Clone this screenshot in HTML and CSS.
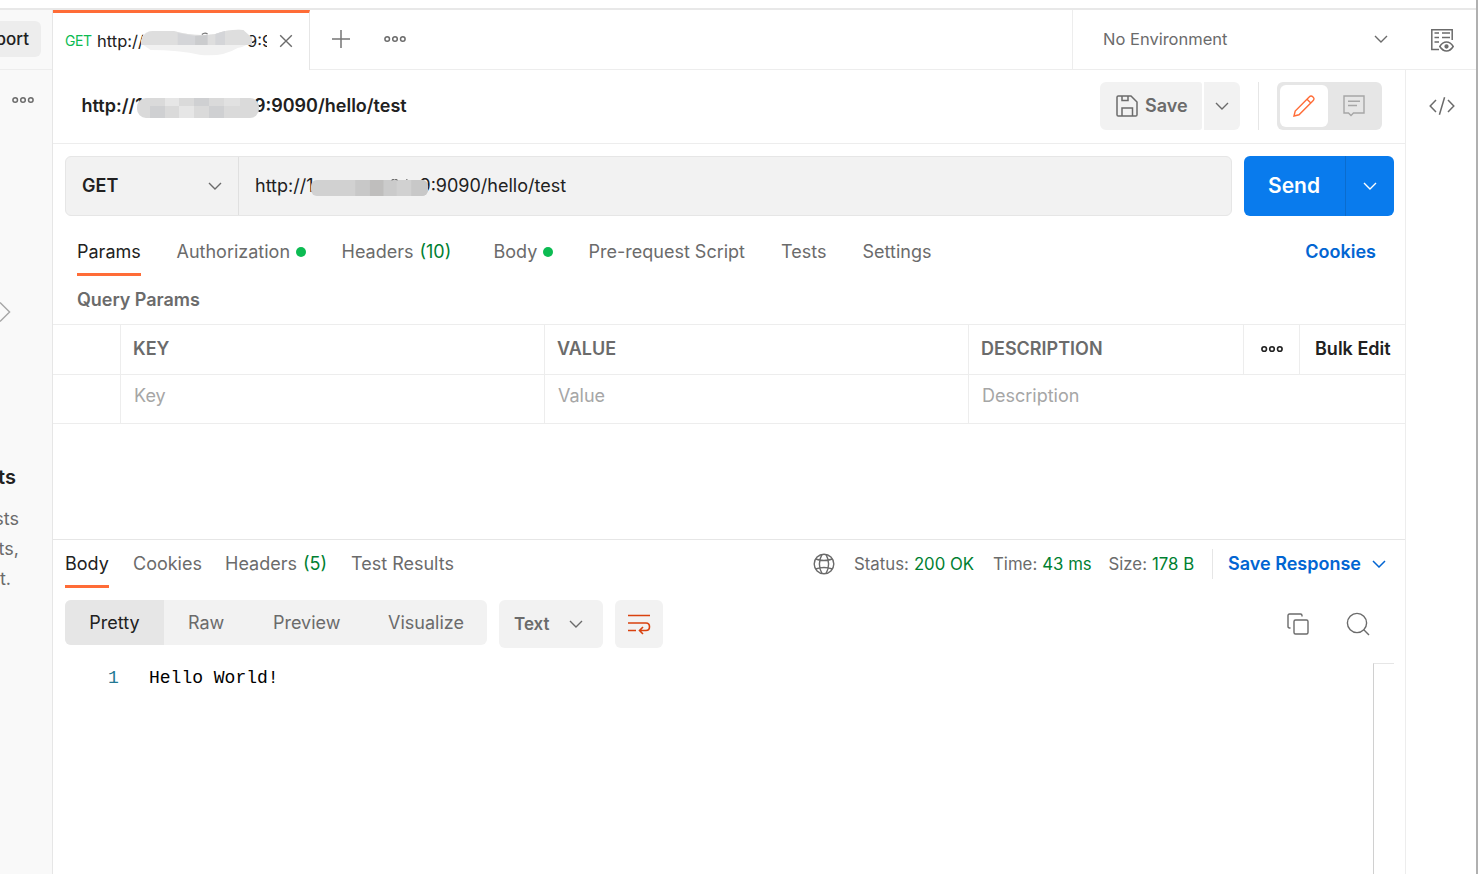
FILE: index.html
```html
<!DOCTYPE html>
<html lang="en">
<head>
<meta charset="utf-8">
<title>API request</title>
<link rel="stylesheet" href="styles.css">
</head>
<body>
<div class="app">
  <div class="strip"></div>
  <div class="columns">
    <aside class="sidebar">
      <div class="side-top"><div class="import">port</div></div>
      <div class="side-menu"><svg class="icon" width="22" height="8" viewBox="0 0 22 8"><g fill="none" stroke="#6b6b6b" stroke-width="1.5"><circle cx="3.2" cy="4" r="2.3"/><circle cx="11" cy="4" r="2.3"/><circle cx="18.8" cy="4" r="2.3"/></g></svg></div>
      <div class="side-chevron"><svg class="icon" width="11" height="22" viewBox="0 0 11 22"><path d="M0 1.5 9.6 11 0 20.5" fill="none" stroke="#a6a6a6" stroke-width="1.4"/></svg></div>
      <div class="side-heading">ts</div>
      <div class="side-text"><p>sts</p><p>ts,</p><p class="last">t.</p></div>
    </aside>

    <div class="content">
      <header class="topbar">
        <div class="tab">
          <span class="tab-method">GET</span>
          <span class="tab-name">http://<svg class="mosaic tab-mosaic" width="112" height="27" viewBox="0 0 116 27" preserveAspectRatio="none"><path d="M1 8Q4 2 12 2H34Q56 8 77 5Q91 0 106 1L115 9Q112 17 100 19Q85 28 62 26Q39 21 10 21L1 15Z" fill="#f1f1f1"/><path d="M0 11Q4 2 12 2H34Q56 8 77 5Q91 0 106 1L115 9V16H0Z" fill="#dedede"/><path d="M38 4 56 7V16H38ZM77 5 87 2V16H77Z" fill="#d4d5d8"/><path d="M56 7 69 6V16H56Z" fill="#cbccce"/><path d="M63 5.5Q66 3 69 5" fill="none" stroke="#777" stroke-width="1.2"/></svg><span class="tab-tail">9:9</span></span>
          <svg class="icon" width="14" height="14" viewBox="0 0 14 14"><path d="M1.2 1.2 12.8 12.8M12.8 1.2 1.2 12.8" stroke="#6b6b6b" stroke-width="1.4"/></svg>
        </div>
        <div class="tab-tools">
          <svg class="icon" width="20" height="20" viewBox="0 0 20 20"><path d="M10 1V19M1 10H19" stroke="#767676" stroke-width="1.5"/></svg>
          <svg class="icon" width="22" height="8" viewBox="0 0 22 8"><g fill="none" stroke="#6b6b6b" stroke-width="1.5"><circle cx="3.2" cy="4" r="2.3"/><circle cx="11" cy="4" r="2.3"/><circle cx="18.8" cy="4" r="2.3"/></g></svg>
        </div>
        <div class="environment">
          <span class="env-name">No Environment</span>
          <svg class="icon" width="14" height="8" viewBox="0 0 14 8"><path d="M1 1 7 7 13 1" fill="none" stroke="#6b6b6b" stroke-width="1.4"/></svg>
        </div>
        <div class="env-look">
          <svg class="icon" width="24" height="24" viewBox="0 0 24 24" fill="none" stroke="#6b6b6b" stroke-width="1.5"><path d="M22.2 12V1.8H1.8V21.5H9"/><path d="M4.5 5H9M12 5H20M4.5 9.5H9M12 9.5H20M4.5 14H9"/><path d="M9.8 18.5Q12.5 14 16.5 14T23.2 18.5Q20.3 23 16.5 23T9.8 18.5Z"/><circle cx="16.5" cy="18.5" r="1.4" fill="#6b6b6b"/></svg>
        </div>
      </header>

      <div class="body-row">
        <main class="main">
          <section class="title-row">
            <h1 class="title">http://1<svg class="mosaic title-mosaic" width="122" height="21" viewBox="0 0 122 21"><clipPath id="title-clip"><rect width="122" height="20" rx="9"/></clipPath><g clip-path="url(#title-clip)"><path fill="#dadada" d="M0 0H122V20H0Z"/><path fill="#e6e6e6" d="M28 0H42V8H28ZM42 8H57V20H42Z"/><path fill="#cfd0d2" d="M13 8H28V20H13ZM57 0H72V8H57ZM72 8H87V20H72Z"/><path fill="#e1e1e1" d="M87 0H103V8H87Z"/></g></svg>9:9090/hello/test</h1>
            <div class="save-group">
              <div class="save">
                <svg class="icon" width="22" height="22" viewBox="0 0 22 22" fill="none" stroke="#6b6b6b" stroke-width="1.5"><path d="M1 2.3Q1 1 2.3 1H15L21 7V19.7Q21 21 19.7 21H2.3Q1 21 1 19.7Z"/><path d="M6 1V5.5H12V1M6 21V13H16.5V21"/></svg>
                <span class="save-label">Save</span>
              </div>
              <div class="save-more"><svg class="icon" width="14" height="8" viewBox="0 0 14 8"><path d="M1 1 7 7 13 1" fill="none" stroke="#6b6b6b" stroke-width="1.4"/></svg></div>
            </div>
            <div class="divider"></div>
            <div class="mode">
              <div class="mode-active"><svg class="icon" width="22" height="22" viewBox="0 0 22 22" fill="none" stroke="#ff6c37" stroke-width="1.4"><path d="M1 21 2.2 16 16.2 2Q18 .2 20 2T20 5.8L6 19.8ZM14 4.2 17.8 8"/></svg></div>
              <div class="mode-item"><svg class="icon" width="22" height="22" viewBox="0 0 22 22" fill="none" stroke="#a6a6a6" stroke-width="1.4"><path d="M1 1H21V18H10.5L8 20.5 5.5 18H1ZM5 6.2H17M5 10.5H14"/></svg></div>
            </div>
          </section>

          <section class="request-row">
            <div class="url-box">
              <div class="method"><span class="method-name">GET</span><svg class="icon" width="14" height="8" viewBox="0 0 14 8"><path d="M1 1 7 7 13 1" fill="none" stroke="#6b6b6b" stroke-width="1.4"/></svg></div>
              <div class="url">http://1<svg class="mosaic url-mosaic" width="117" height="17" viewBox="0 0 119 17" preserveAspectRatio="none"><clipPath id="url-clip"><rect width="119" height="16" y="1" rx="6"/></clipPath><g clip-path="url(#url-clip)"><path fill="#d1d1d1" d="M0 1H119V17H0Z"/><path fill="#c8c8c8" d="M45 1H60V17H45ZM102 1H119V17H102Z"/><path fill="#bfbebd" d="M60 1H74V17H60Z"/><path fill="#cbcbcb" d="M74 1H87V17H74Z"/></g><path d="M82 1Q85-1 88 1M97 1 98 0" fill="none" stroke="#555"/></svg>9:9090/hello/test</div>
            </div>
            <div class="send"><span class="send-label">Send</span><span class="send-more"><svg class="icon" width="14" height="8" viewBox="0 0 14 8"><path d="M1 1 7 7 13 1" fill="none" stroke="#fff" stroke-width="1.4"/></svg></span></div>
          </section>

          <nav class="request-tabs">
            <span class="rtab current t-params">Params</span>
            <span class="rtab t-auth">Authorization<i class="dot"></i></span>
            <span class="rtab t-headers">Headers <b class="count">(10)</b></span>
            <span class="rtab t-body">Body<i class="dot"></i></span>
            <span class="rtab t-pre">Pre-request Script</span>
            <span class="rtab t-tests">Tests</span>
            <span class="rtab">Settings</span>
            <span class="cookies">Cookies</span>
          </nav>

          <h2 class="params-title">Query Params</h2>
          <div class="table">
            <div class="tr head"><span class="td"></span><span class="td">KEY</span><span class="td">VALUE</span><span class="td">DESCRIPTION</span><span class="td more"><svg class="icon" width="22" height="8" viewBox="0 0 22 8"><g fill="none" stroke="#212121" stroke-width="1.6"><circle cx="3.2" cy="4" r="2.3"/><circle cx="11" cy="4" r="2.3"/><circle cx="18.8" cy="4" r="2.3"/></g></svg></span><span class="td bulk">Bulk Edit</span></div>
            <div class="tr row"><span class="td"></span><span class="td">Key</span><span class="td">Value</span><span class="td wide">Description</span></div>
          </div>

          <section class="response">
            <div class="response-tabs">
              <span class="stab current s-body">Body</span>
              <span class="stab s-cookies">Cookies</span>
              <span class="stab s-headers">Headers <b class="count">(5)</b></span>
              <span class="stab">Test Results</span>
              <div class="status">
                <svg class="icon" width="22" height="22" viewBox="0 0 22 22" fill="none" stroke="#6b6b6b" stroke-width="1.4"><circle cx="11" cy="11" r="9.8"/><path d="M9 1.4Q3.8 11 9 20.6M13 1.4Q18.2 11 13 20.6M2.6 6Q11 9 19.4 6M2.6 16Q11 13 19.4 16"/></svg>
                <span class="stat st1">Status: <b class="good">200 OK</b></span>
                <span class="stat st2">Time: <b class="good">43 ms</b></span>
                <span class="stat st3">Size: <b class="good">178 B</b></span>
                <span class="stat-line"></span>
                <span class="save-response">Save Response</span>
                <svg class="icon" width="14" height="8" viewBox="0 0 14 8"><path d="M1 1 7 7 13 1" fill="none" stroke="#0265d2" stroke-width="1.5"/></svg>
              </div>
            </div>
            <div class="viewer-bar">
              <div class="modes"><span class="view on">Pretty</span><span class="view v-raw">Raw</span><span class="view v-preview">Preview</span><span class="view v-vis">Visualize</span></div>
              <div class="format"><span>Text</span><svg class="icon" width="14" height="8" viewBox="0 0 14 8"><path d="M1 1 7 7 13 1" fill="none" stroke="#6b6b6b" stroke-width="1.4"/></svg></div>
              <div class="wrap"><svg class="icon" width="24" height="22" viewBox="0 0 24 22" fill="none" stroke="#d9420f" stroke-width="1.6"><path d="M1 2.5H23M1 10H19Q22.5 10 22.5 13.7T19 17.5H13M1 17.5H9M16 14 12.5 17.5 16 21"/></svg></div>
              <div class="viewer-tools">
                <svg class="icon" width="22" height="22" viewBox="0 0 22 22" fill="none" stroke="#6b6b6b" stroke-width="1.4"><rect x="7" y="7" width="14" height="14" rx="1.5"/><path d="M3.5 15H2.5Q1 15 1 13.5V2.5Q1 1 2.5 1H13.5Q15 1 15 2.5V3.5"/></svg>
                <svg class="icon" width="24" height="24" viewBox="0 0 24 24" fill="none" stroke="#6b6b6b" stroke-width="1.4"><circle cx="11" cy="11" r="9.6"/><path d="M17.8 17.8 23 23"/></svg>
              </div>
            </div>
            <div class="editor">
              <span class="line-no">1</span><span class="code">Hello World!</span>
              <div class="minimap"></div>
            </div>
          </section>
        </main>
        <aside class="rail"><svg class="icon" width="26" height="20" viewBox="0 0 26 20"><path d="M7 4 1.2 10 7 16M19 4 24.8 10 19 16M15.6 1.2 10.4 18.8" fill="none" stroke="#6b6b6b" stroke-width="1.5"/></svg></aside>
      </div>
    </div>
  </div>
</div>
</body>
</html>
```
FILE: styles.css
```css
* { box-sizing: border-box; }
body { margin: 0; font-family: Inter, "Liberation Sans", sans-serif; font-size: 18px; color: #6b6b6b; background: #fff; }
h1, h2, p { margin: 0; font-weight: inherit; }
b { font-weight: inherit; }
.icon { display: block; flex: none; }

.app { width: 1478px; height: 874px; overflow: hidden; display: flex; flex-direction: column; border-right: 2px solid #b0b0b0; }
.strip { height: 10px; flex: none; border-bottom: 2px solid #e8e8e8; }
.columns { flex: 1; display: flex; min-height: 0; }

.sidebar { width: 53px; flex: none; background: #f9f9f9; border-right: 1px solid #e6e6e6; overflow: hidden; }
.side-top { height: 60px; padding-top: 11px; border-bottom: 1px solid #ededed; }
.import { width: 41px; height: 36px; padding-right: 12px; display: flex; align-items: center; justify-content: flex-end; background: #ededed; border-radius: 0 6px 6px 0; font-weight: 500; color: #212121; font-size: 17px; }
.side-menu { padding: 26px 0 0 12px; height: 231px; }
.side-chevron { height: 22px; }
.side-heading { width: 16px; margin-top: 142px; display: flex; justify-content: flex-end; line-height: 24px; font-size: 20px; font-weight: 600; color: #212121; }
.side-text { margin-top: 15px; width: 19px; line-height: 30px; }
.side-text p { display: flex; justify-content: flex-end; }
.side-text .last { padding-right: 8px; }

.content { flex: 1; display: flex; flex-direction: column; min-width: 0; }
.topbar { height: 60px; flex: none; display: flex; }
.tab { width: 257px; display: flex; align-items: center; padding: 0 0 2px 12px; border-top: 3px solid #ff6c37; border-right: 1px solid #e6e6e6; }
.tab-method { width: 32px; font-size: 14px; color: #0cbb52; letter-spacing: -.4px; }
.tab-name { width: 170px; margin-right: 12px; display: flex; align-items: center; overflow: hidden; color: #212121; font-size: 16.5px; white-space: nowrap; }
.mosaic { position: relative; flex: none; }
.tab-mosaic { margin: 3px -6px 0 -3px; }
.tab-tools { flex: 1; display: flex; align-items: center; gap: 33px; padding: 0 0 2px 21px; border-bottom: 1px solid #ededed; }
.environment { width: 334px; display: flex; align-items: center; justify-content: space-between; padding: 0 18px 1px 30px; border-left: 1px solid #ededed; border-bottom: 1px solid #ededed; }
.env-name { font-size: 16.5px; }
.env-look { width: 70px; display: flex; align-items: center; padding-left: 24px; border-bottom: 1px solid #ededed; }

.body-row { flex: 1; display: flex; min-height: 0; }
.main { flex: 1; min-width: 0; display: flex; flex-direction: column; }
.rail { width: 71px; flex: none; border-left: 1px solid #ededed; padding: 26px 0 0 23px; }

.title-row { height: 74px; flex: none; display: flex; align-items: center; padding: 0 23px 1px 28.5px; border-bottom: 1px solid #ededed; }
.title { flex: 1; display: flex; align-items: center; padding-bottom: 2px; font-size: 18px; font-weight: 600; color: #212121; }
.title-mosaic { margin: 7px -5px 0 -6px; }
.save-group { display: flex; gap: 2px; }
.save { width: 102px; height: 48px; display: flex; align-items: center; gap: 7px; padding-left: 16px; background: #f2f2f2; border-radius: 6px 3px 3px 6px; font-weight: 600; }
.save-label, .method-name { padding-bottom: 1px; }
.save-more { width: 36px; display: flex; align-items: center; justify-content: center; background: #f2f2f2; border-radius: 0 6px 6px 0; }
.divider { width: 1px; height: 48px; margin: 0 18px; background: #e6e6e6; }
.mode { width: 105px; height: 48px; padding: 3px; display: flex; background: #e6e6e6; border-radius: 6px; }
.mode-active, .mode-item { width: 48px; flex: none; display: flex; align-items: center; justify-content: center; }
.mode-active { background: #fff; border-radius: 6px; }
.mode-item { width: 51px; }

.request-row { height: 72px; flex: none; display: flex; gap: 12px; padding: 12px 11px 0 12px; }
.url-box { flex: 1; height: 60px; display: flex; background: #f2f2f2; border: 1px solid #e6e6e6; border-radius: 6px; color: #212121; }
.method { width: 173px; display: flex; align-items: center; justify-content: space-between; padding: 0 16px; border-right: 1px solid #e0e0e0; font-weight: 600; }
.url { display: flex; align-items: center; padding: 0 0 2px 16px; }
.url-mosaic { margin: 4px -9px 0 -2px; }
.send { width: 150px; height: 60px; display: flex; background: #097bed; border-radius: 6px; color: #fff; overflow: hidden; }
.send-label { flex: 1; display: flex; align-items: center; justify-content: center; padding: 0 1px 2px 0; font-size: 21px; font-weight: 600; }
.send-more { width: 49px; display: flex; align-items: center; justify-content: center; border-left: 1px solid #0a6cce; }

.request-tabs { height: 60px; flex: none; display: flex; padding: 12px 29px 0 24px; white-space: nowrap; line-height: 48px; }
.rtab { height: 48px; flex: none; display: flex; align-items: center; }
.current { color: #212121; border-bottom: 3px solid #ff6c37; line-height: 48px; padding-top: 3px; }
.t-params { width: 64px; margin-right: 35.5px; }
.t-auth { width: 165px; }
.t-headers { width: 152px; gap: 6px; }
.t-body { width: 95px; }
.t-pre { width: 192.5px; }
.t-tests { width: 81.5px; }
.dot { width: 10px; height: 10px; margin-left: 5.5px; border-radius: 50%; background: #0cbb52; }
.count, .good { color: #007f31; }
.cookies { margin-left: auto; color: #0265d2; font-weight: 600; }

.params-title { height: 48px; flex: none; padding-left: 24px; line-height: 48px; font-size: 18px; font-weight: 600; letter-spacing: -.05px; }
.table { height: 215px; flex: none; border-top: 1px solid #ededed; }
.tr { display: grid; grid-template-columns: 68px 424px 424px 275px 56px 105px; border-bottom: 1px solid #ededed; }
.td { display: flex; align-items: center; padding: 0 0 2px 12px; border-right: 1px solid #ededed; }
.td:last-child { border-right: 0; }
.head { height: 50px; font-weight: 600; }
.row { height: 49px; color: #a6a6a6; }
.row .td { padding: 0 0 8px 13px; }
.row .wide { grid-column: span 3; }
.head .more { padding: 0 0 2px; justify-content: center; }
.head .bulk { padding-left: 15px; color: #212121; white-space: nowrap; }

.response { flex: 1; display: flex; flex-direction: column; border-top: 1px solid #e6e6e6; }
.response-tabs { height: 48px; flex: none; display: flex; padding: 0 19px 0 12px; line-height: 48px; white-space: nowrap; }
.stab { height: 48px; display: flex; align-items: center; }
.s-body { width: 44px; margin-right: 24px; }
.s-cookies { width: 92px; }
.s-headers { width: 126px; gap: 6px; }
.status { margin-left: auto; display: flex; align-items: center; }
.stat { display: flex; gap: 5px; font-size: 16.8px; }
.st1 { width: 139px; margin-left: 19px; }
.st2 { width: 115.5px; }
.st3 { width: 103.5px; }
.stat-line { width: 1px; height: 30px; background: #e6e6e6; }
.save-response { width: 144px; margin-left: 15px; color: #0265d2; font-weight: 600; }
.viewer-bar { height: 72px; flex: none; display: flex; align-items: flex-start; gap: 12px; padding: 12px 35px 0 12px; }
.modes { width: 422px; height: 45px; display: flex; background: #f2f2f2; border-radius: 6px; overflow: hidden; }
.view { display: flex; align-items: center; }
.on { width: 99px; justify-content: center; background: #e6e6e6; color: #212121; }
.v-raw { width: 109px; padding-left: 24px; }
.v-preview { width: 115px; }
.v-vis { width: 99px; }
.format { width: 104px; height: 48px; display: flex; align-items: center; justify-content: space-between; padding: 0 20px 0 15px; background: #f2f2f2; border-radius: 6px; font-size: 17px; font-weight: 600; }
.wrap { width: 48px; height: 48px; display: flex; align-items: center; justify-content: center; background: #f2f2f2; border-radius: 6px; }
.viewer-tools { height: 48px; margin-left: auto; display: flex; align-items: center; gap: 37px; }
.editor { flex: 1; display: flex; padding: 3px 11px 0 55px; font-family: "Liberation Mono", monospace; font-size: 18px; line-height: 30px; }
.line-no { width: 41px; color: #237893; }
.code { color: #000; white-space: pre; }
.minimap { width: 21px; margin-left: auto; border-top: 1px solid #e6e6e6; border-left: 1px solid #d0d0d0; }
```
